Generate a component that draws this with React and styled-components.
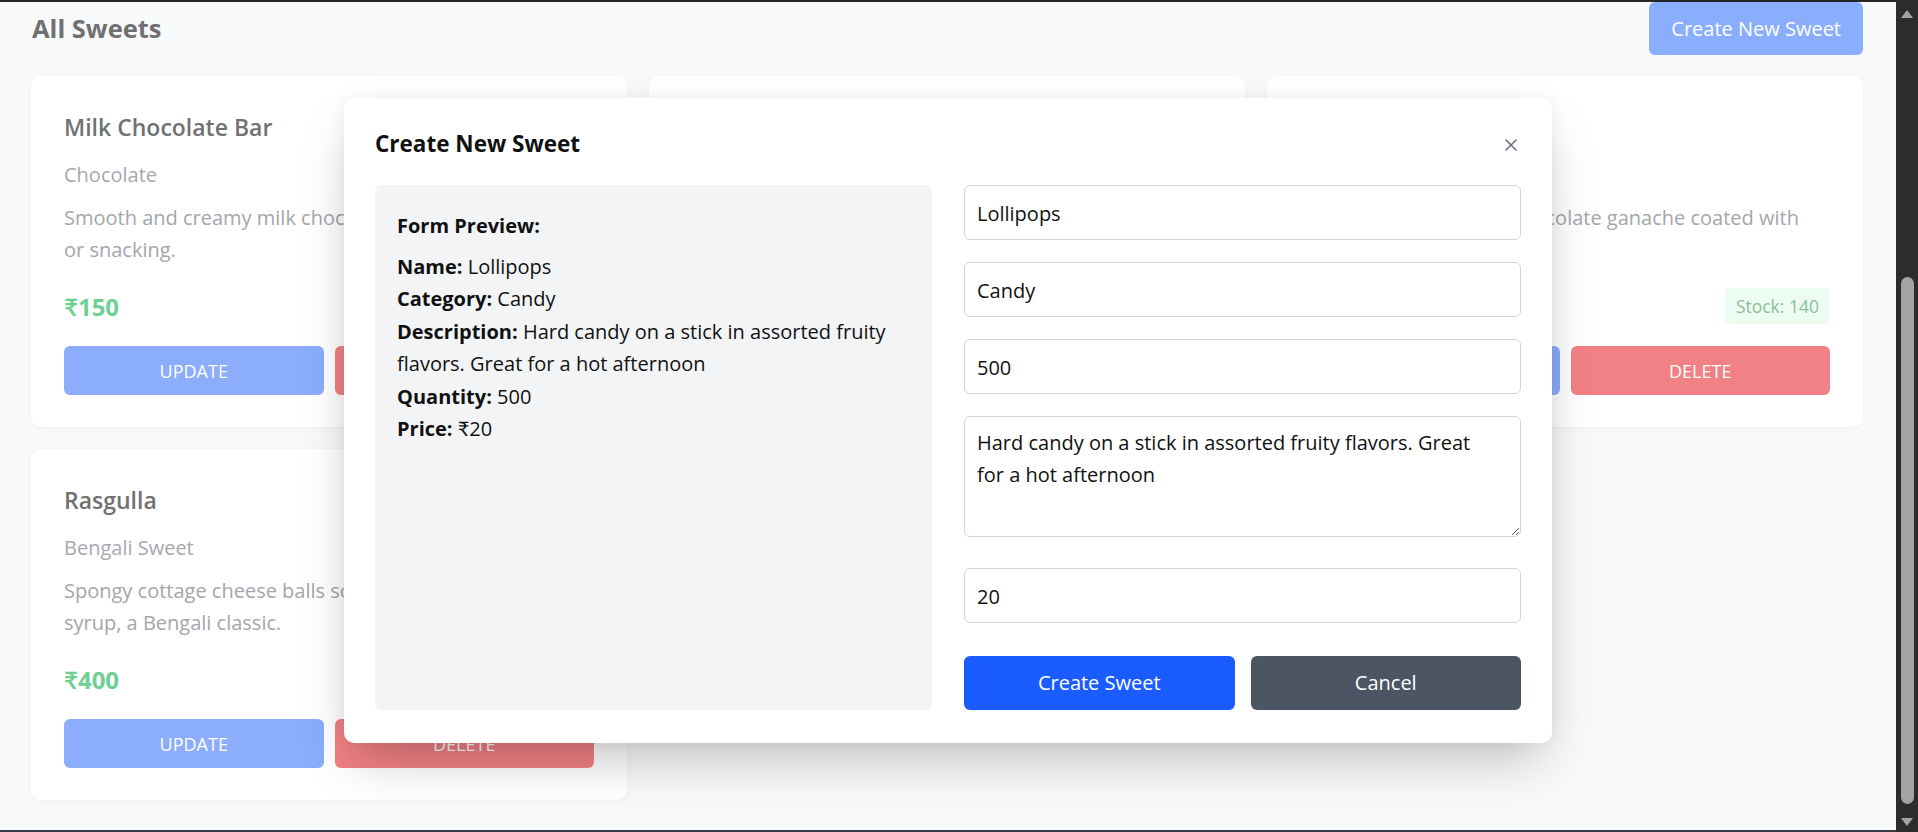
import React from 'react'
import styled, { createGlobalStyle } from 'styled-components'

const GlobalStyle = createGlobalStyle`
  * { box-sizing: border-box; }
  html, body { margin: 0; padding: 0; overflow: hidden; }
  body {
    font-family: "Open Sans", Lato, sans-serif;
    background: #f8f9fb;
  }
`

const sweets = [
  {
    name: 'Milk Chocolate Bar',
    category: 'Chocolate',
    description: 'Smooth and creamy milk chocolate, perfect for holidays or snacking.',
    price: 150,
    stock: 80,
  },
  {
    name: 'Kaju Katli',
    category: 'Indian Sweet',
    description: 'Thin diamond shaped cashew fudge topped with edible silver leaf.',
    price: 600,
    stock: 45,
  },
  {
    name: 'Chocolate Truffle',
    category: 'Chocolate',
    description: 'Decadent truffles with chocolate ganache coated with cocoa powder.',
    price: 250,
    stock: 140,
  },
  {
    name: 'Rasgulla',
    category: 'Bengali Sweet',
    description: 'Spongy cottage cheese balls soaked in fragrant sugar syrup, a Bengali classic.',
    price: 400,
    stock: 60,
  },
]

export default function App() {
  return (
    <>
      <GlobalStyle />
      <Frame>
        <Main>
          <Header>
            <PageTitle>All Sweets</PageTitle>
            <CreateButton>Create New Sweet</CreateButton>
          </Header>
          <CardGrid>
            {sweets.map((s) => (
              <Card key={s.name}>
                <CardTitle>{s.name}</CardTitle>
                <Category>{s.category}</Category>
                <Description>{s.description}</Description>
                <PriceRow>
                  <Price>₹{s.price}</Price>
                  <StockBadge>Stock: {s.stock}</StockBadge>
                </PriceRow>
                <Actions>
                  <ActionButton $bg="#8badfc">Update</ActionButton>
                  <ActionButton $bg="#f28185">Delete</ActionButton>
                </Actions>
              </Card>
            ))}
          </CardGrid>

          <Overlay>
            <Modal>
              <ModalHeader>
                <ModalTitle>Create New Sweet</ModalTitle>
                <CloseButton aria-label="Close">
                  <svg width="12" height="12" viewBox="0 0 12 12">
                    <path d="M1 1 L11 11 M11 1 L1 11" stroke="currentColor" strokeWidth="1.6" strokeLinecap="round" />
                  </svg>
                </CloseButton>
              </ModalHeader>
              <ModalBody>
                <Preview>
                  <PreviewHeading>Form Preview:</PreviewHeading>
                  <PreviewLine><strong>Name:</strong> Lollipops</PreviewLine>
                  <PreviewLine><strong>Category:</strong> Candy</PreviewLine>
                  <PreviewLine>
                    <strong>Description:</strong> Hard candy on a stick in assorted fruity flavors. Great for a hot afternoon
                  </PreviewLine>
                  <PreviewLine><strong>Quantity:</strong> 500</PreviewLine>
                  <PreviewLine><strong>Price:</strong> ₹20</PreviewLine>
                </Preview>
                <Form onSubmit={(e) => e.preventDefault()}>
                  <Field defaultValue="Lollipops" />
                  <Field defaultValue="Candy" />
                  <Field defaultValue="500" />
                  <TextArea defaultValue="Hard candy on a stick in assorted fruity flavors. Great for a hot afternoon" />
                  <Field defaultValue="20" $last />
                  <ButtonRow>
                    <ModalButton $bg="#1a5cff" type="submit">Create Sweet</ModalButton>
                    <ModalButton $bg="#4b5563" type="button">Cancel</ModalButton>
                  </ButtonRow>
                </Form>
              </ModalBody>
            </Modal>
          </Overlay>
        </Main>

        <ScrollBar>
          <ArrowUp />
          <Thumb />
          <ArrowDown />
        </ScrollBar>
      </Frame>
    </>
  )
}

const Frame = styled.div`
  display: flex;
  width: 1918px;
  height: 832px;
`

const Main = styled.main`
  position: relative;
  flex: 1;
  background: #f8f9fb;
  border-top: 2px solid #262626;
  border-bottom: 2px solid #373c48;
  padding: 0 33px 0 31px;
  overflow: hidden;
`

const Header = styled.header`
  display: flex;
  justify-content: space-between;
  align-items: center;
  height: 53px;
  margin-bottom: 21px;
`

const PageTitle = styled.h1`
  margin: -2px 0 0 1px;
  font-size: 25.5px;
  font-weight: 700;
  color: #707072;
`

const CreateButton = styled.button`
  height: 53px;
  padding: 0 22px;
  border: none;
  border-radius: 6px;
  background: #8aaefd;
  color: #fff;
  font-family: inherit;
  font-size: 20px;
`

const CardGrid = styled.div`
  display: grid;
  grid-template-columns: repeat(3, 1fr);
  gap: 22px;
`

const Card = styled.div`
  background: #fff;
  border-radius: 10px;
  padding: 34px 33px 32px;
  box-shadow: 0 1px 4px rgba(0, 0, 0, 0.04);
`

const CardTitle = styled.h3`
  margin: 0;
  font-size: 23px;
  line-height: 35px;
  font-weight: 600;
  color: #717171;
`

const Category = styled.p`
  margin: 15px 0 0;
  font-size: 20px;
  line-height: 30px;
  color: #a6a8ad;
`

const Description = styled.p`
  margin: 12px 0 0;
  font-size: 20px;
  line-height: 32px;
  color: #a3a6ab;
`

const PriceRow = styled.div`
  display: flex;
  justify-content: space-between;
  align-items: center;
  height: 36px;
  margin-top: 22px;
`

const Price = styled.span`
  font-size: 24px;
  font-weight: 700;
  color: #6fd094;
`

const StockBadge = styled.span`
  height: 36px;
  line-height: 36px;
  padding: 0 11px;
  border-radius: 5px;
  background: #edfcf1;
  color: #8dbc9b;
  font-size: 17.5px;
`

const Actions = styled.div`
  display: flex;
  gap: 11px;
  margin-top: 22px;
`

const ActionButton = styled.button`
  flex: 1;
  height: 49px;
  border: none;
  border-radius: 6px;
  background: ${(p) => p.$bg};
  color: #fff;
  font-family: inherit;
  font-size: 18px;
  text-transform: uppercase;
`

const Overlay = styled.div`
  position: absolute;
  inset: 0;
  display: flex;
  align-items: center;
  justify-content: center;
  padding-top: 8px;
`

const Modal = styled.div`
  width: 1208px;
  background: #fff;
  border-radius: 10px;
  padding: 28px 31px 33px;
  box-shadow: 0 25px 50px -12px rgba(0, 0, 0, 0.25), 0 0 18px rgba(0, 0, 0, 0.05);
`

const ModalHeader = styled.div`
  display: flex;
  justify-content: space-between;
  align-items: center;
  height: 35px;
  margin-bottom: 24px;
`

const ModalTitle = styled.h2`
  margin: 0;
  font-size: 22.5px;
  line-height: 35px;
  font-weight: 700;
  color: #111;
`

const CloseButton = styled.button`
  display: flex;
  padding: 0;
  margin: 4px 4px 0 0;
  border: none;
  background: none;
  color: #6b7280;
`

const ModalBody = styled.div`
  display: grid;
  grid-template-columns: 1fr 1fr;
  gap: 32px;
`

const Preview = styled.div`
  background: #f3f4f6;
  border-radius: 6px;
  padding: 23px 6px 23px 22px;
  color: #111;
  font-size: 20px;
`

const PreviewHeading = styled.h4`
  margin: 0 0 8px;
  font-size: 20px;
  line-height: 35px;
  font-weight: 700;
`

const PreviewLine = styled.p`
  margin: 0;
  line-height: 32.5px;

  strong {
    font-weight: 700;
  }
`

const Form = styled.form`
  display: flex;
  flex-direction: column;
`

const Field = styled.input`
  height: 55px;
  margin-bottom: ${(p) => (p.$last ? '33px' : '22px')};
  padding: 2px 12px 0;
  border: 1px solid #d1d5db;
  border-radius: 6px;
  font-family: inherit;
  font-size: 20px;
  color: #111;
  outline: none;
`

const TextArea = styled.textarea`
  height: 121px;
  margin-bottom: 31px;
  padding: 10px 30px 10px 12px;
  border: 1px solid #d1d5db;
  border-radius: 6px;
  font-family: inherit;
  font-size: 20px;
  line-height: 32.5px;
  color: #111;
  resize: vertical;
  outline: none;
`

const ButtonRow = styled.div`
  display: grid;
  grid-template-columns: 1fr 1fr;
  gap: 16px;
`

const ModalButton = styled.button`
  height: 54px;
  border: none;
  border-radius: 6px;
  background: ${(p) => p.$bg};
  color: #fff;
  font-family: inherit;
  font-size: 20px;
`

const ScrollBar = styled.aside`
  width: 22px;
  height: 832px;
  background: #2c2c2c;
  display: flex;
  flex-direction: column;
  align-items: center;
`

const ArrowUp = styled.div`
  margin-top: 10px;
  width: 0;
  height: 0;
  border-left: 6px solid transparent;
  border-right: 6px solid transparent;
  border-bottom: 8px solid #a3a3a3;
`

const Thumb = styled.div`
  margin-top: 259px;
  width: 13px;
  height: 527px;
  border-radius: 7px;
  background: #a3a3a3;
`

const ArrowDown = styled.div`
  margin-top: 14px;
  width: 0;
  height: 0;
  border-left: 6px solid transparent;
  border-right: 6px solid transparent;
  border-top: 8px solid #a3a3a3;
`
